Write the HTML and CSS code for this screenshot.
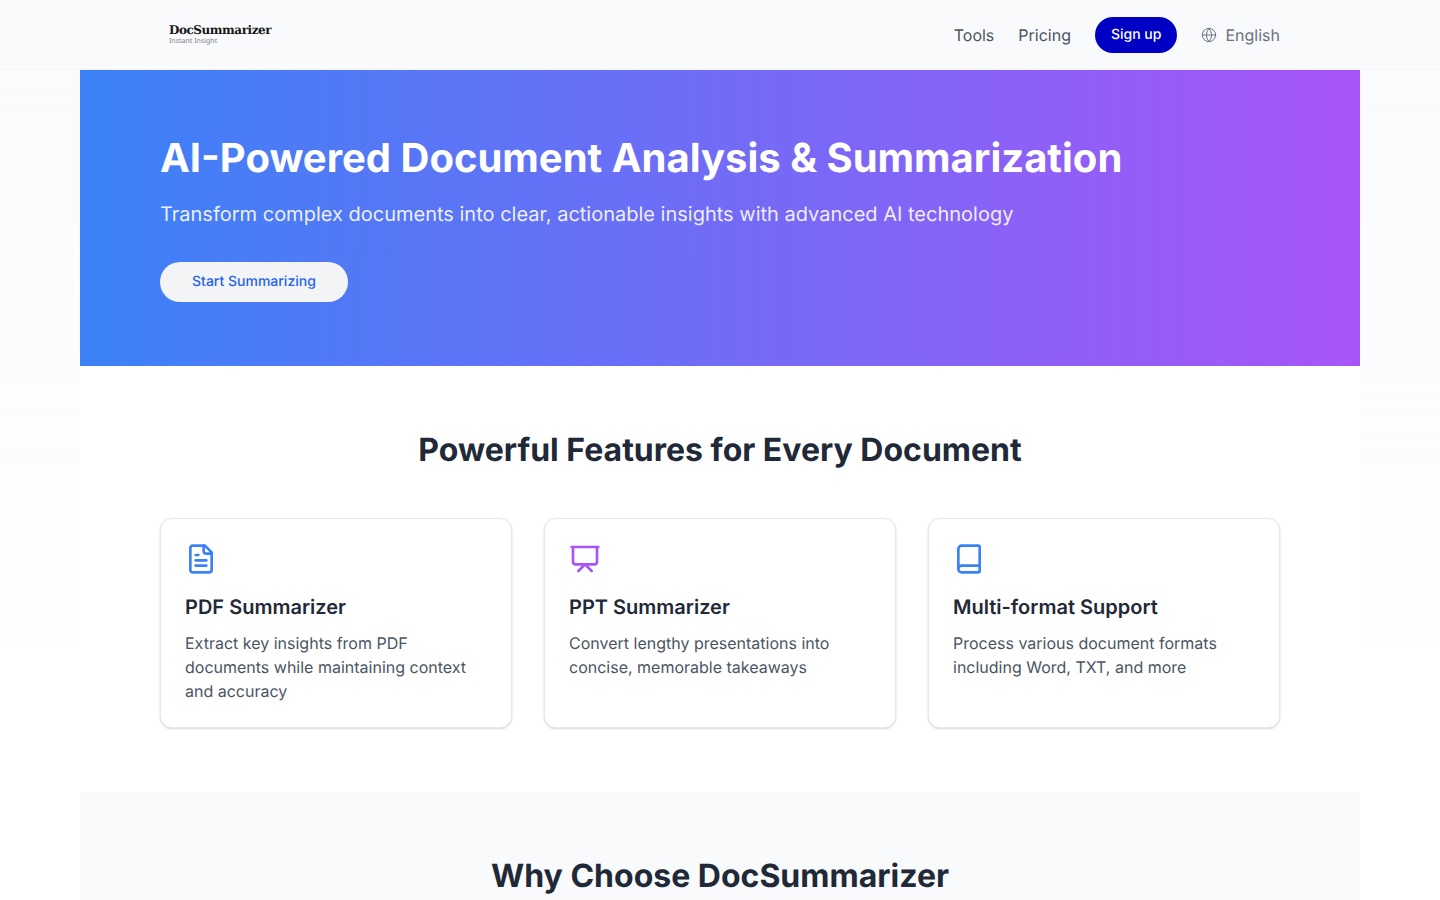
FILE: index.html
```html
<!DOCTYPE html>
<html lang="en">
<head>
<meta charset="utf-8">
<title>DocSummarizer</title>
<link rel="stylesheet" href="styles.css">
</head>
<body>
<header class="site-header">
  <div class="header-inner">
    <a class="logo" href="#">
      <span class="logo-name">DocSummarizer</span>
      <span class="logo-tag">Instant Insight</span>
    </a>
    <nav class="nav">
      <a class="nav-link" href="#">Tools</a>
      <a class="nav-link" href="#">Pricing</a>
      <a class="signup" href="#">Sign up</a>
      <a class="lang" href="#">
        <svg class="lang-icon" viewBox="0 0 24 24" fill="none" stroke="currentColor" stroke-width="2" stroke-linecap="round" stroke-linejoin="round"><circle cx="12" cy="12" r="10"/><path d="M12 2a14.5 14.5 0 0 0 0 20 14.5 14.5 0 0 0 0-20"/><path d="M2 12h20"/></svg>
        <span>English</span>
      </a>
    </nav>
  </div>
</header>
<main class="container">
  <section class="hero">
    <h1 class="hero-title">AI-Powered Document Analysis &amp; Summarization</h1>
    <p class="hero-sub">Transform complex documents into clear, actionable insights with advanced AI technology</p>
    <a class="hero-btn" href="#">Start Summarizing</a>
  </section>
  <section class="features">
    <h2 class="section-title">Powerful Features for Every Document</h2>
    <div class="cards">
      <article class="card">
        <svg class="card-icon icon-blue" viewBox="0 0 24 24" fill="none" stroke="currentColor" stroke-width="2" stroke-linecap="round" stroke-linejoin="round"><path d="M15 2H6a2 2 0 0 0-2 2v16a2 2 0 0 0 2 2h12a2 2 0 0 0 2-2V7Z"/><path d="M14 2v4a2 2 0 0 0 2 2h4"/><path d="M10 9H8"/><path d="M16 13H8"/><path d="M16 17H8"/></svg>
        <h3 class="card-title">PDF Summarizer</h3>
        <p class="card-text">Extract key insights from PDF documents while maintaining context and accuracy</p>
      </article>
      <article class="card">
        <svg class="card-icon icon-purple" viewBox="0 0 24 24" fill="none" stroke="currentColor" stroke-width="2" stroke-linecap="round" stroke-linejoin="round"><path d="M2 3h20"/><path d="M21 3v11a2 2 0 0 1-2 2H5a2 2 0 0 1-2-2V3"/><path d="m7 21 5-5 5 5"/></svg>
        <h3 class="card-title">PPT Summarizer</h3>
        <p class="card-text">Convert lengthy presentations into concise, memorable takeaways</p>
      </article>
      <article class="card">
        <svg class="card-icon icon-blue" viewBox="0 0 24 24" fill="none" stroke="currentColor" stroke-width="2" stroke-linecap="round" stroke-linejoin="round"><path d="M4 19.5v-15A2.5 2.5 0 0 1 6.5 2H19a1 1 0 0 1 1 1v18a1 1 0 0 1-1 1H6.5a1 1 0 0 1 0-5H20"/></svg>
        <h3 class="card-title">Multi-format Support</h3>
        <p class="card-text">Process various document formats including Word, TXT, and more</p>
      </article>
    </div>
  </section>
  <section class="why">
    <h2 class="section-title">Why Choose DocSummarizer</h2>
  </section>
</main>
</body>
</html>
```
FILE: styles.css
```css
* { box-sizing: border-box; }
html, body { margin: 0; padding: 0; }
body {
  font-family: Inter, "Liberation Sans", sans-serif;
  color: #1f2937;
  background-color: #fff;
  background-image: linear-gradient(#f9fafb, #fdfefe);
  background-size: 100% 648px;
  background-repeat: no-repeat;
  text-rendering: geometricPrecision;
}
a { text-decoration: none; color: inherit; }
.site-header {
  height: 70px;
  background: #f9fafb;
  border-bottom: 1px solid #f3f4f6;
}
.header-inner {
  max-width: 1280px;
  margin: 0 auto;
  height: 69px;
  padding: 0 80px;
  display: flex;
  align-items: center;
  justify-content: space-between;
}
.logo { display: flex; flex-direction: column; padding: 0 0 0 9px; }
.logo-name {
  font-family: "DejaVu Serif", serif;
  font-weight: 700;
  font-size: 12px;
  line-height: 14px;
  color: #171717;
  letter-spacing: -0.45px;
}
.logo-tag {
  font-family: "Noto Sans", sans-serif;
  font-size: 7px;
  line-height: 9px;
  color: #7b7f86;
}
.nav { display: flex; align-items: center; gap: 24px; }
.nav-link { font-size: 16px; line-height: 24px; color: #4b5563; }
.signup {
  height: 36px;
  padding: 0 16px;
  border-radius: 18px;
  background: #0000c5;
  color: #fff;
  font-size: 14px;
  font-weight: 500;
  line-height: 36px;
}
.lang { display: flex; align-items: center; gap: 8px; color: #6b7280; font-size: 16px; line-height: 24px; }
.lang-icon { width: 16px; height: 16px; stroke-width: 1.5; }
.container { max-width: 1280px; margin: 0 auto; }
.hero {
  height: 296px;
  padding: 64px 80px 0;
  background: linear-gradient(90deg, #3b82f6, #a855f7);
  color: #fff;
}
.hero-title {
  margin: 0 0 16px;
  font-size: 40px;
  line-height: 48px;
  font-weight: 700;
}
.hero-sub {
  margin: 0 0 32px;
  font-size: 20px;
  line-height: 32px;
  color: rgba(255,255,255,0.9);
}
.hero-btn {
  display: inline-block;
  height: 40px;
  padding: 0 32px;
  border-radius: 20px;
  background: #f3f4f6;
  color: #2563eb;
  font-size: 14px;
  font-weight: 500;
  line-height: 40px;
}
.features { background: #fff; padding: 64px 80px; }
.section-title {
  margin: 0;
  text-align: center;
  font-size: 32px;
  line-height: 40px;
  font-weight: 700;
  color: #1f2937;
}
.cards {
  margin-top: 48px;
  display: grid;
  grid-template-columns: repeat(3, 1fr);
  gap: 32px;
}
.card {
  height: 210px;
  padding: 24px;
  background: #fff;
  border: 1px solid #e5e7eb;
  border-radius: 12px;
  box-shadow: 0 1px 3px rgba(0,0,0,0.1), 0 1px 2px rgba(0,0,0,0.06);
}
.card-icon { display: block; width: 32px; height: 32px; }
.icon-blue { color: #3b82f6; }
.icon-purple { color: #a855f7; }
.card-title {
  margin: 16px 0 8px;
  font-size: 20px;
  line-height: 32px;
  font-weight: 600;
  color: #1f2937;
}
.card-text {
  margin: 0;
  font-size: 16px;
  line-height: 24px;
  color: #4b5563;
}
.why { background: #f9fafb; padding: 64px 80px; }
```
